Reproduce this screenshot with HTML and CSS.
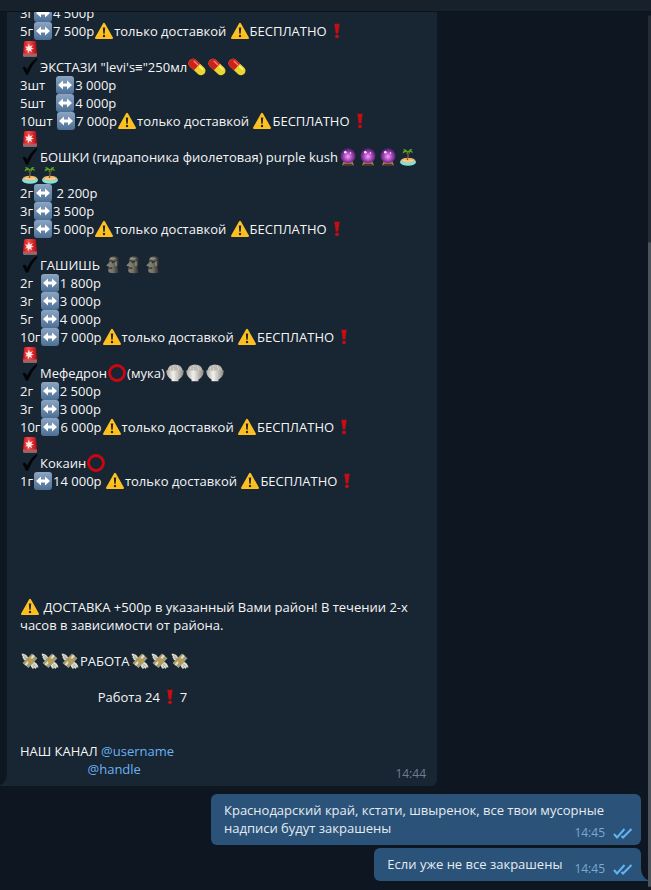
FILE: index.html
```html
<!DOCTYPE html>
<html lang="ru">
<head>
<meta charset="utf-8">
<title>Чат</title>
<link rel="stylesheet" href="styles.css">
</head>
<body>
<svg class="sprite" aria-hidden="true">
  <defs>
    <linearGradient id="g-blue" x2="0" y2="1"><stop stop-color="#8ba5c2"/><stop offset="1" stop-color="#4d6f96"/></linearGradient>
    <linearGradient id="g-warn" x2="0" y2="1"><stop stop-color="#ffd63c"/><stop offset="1" stop-color="#fbb818"/></linearGradient>
    <linearGradient id="g-siren" x2="1" y2="0"><stop stop-color="#c9151b"/><stop offset=".4" stop-color="#fb4a48"/><stop offset="1" stop-color="#a90d13"/></linearGradient>
    <radialGradient id="g-ball" cx=".5" cy=".55" r=".5"><stop stop-color="#f3a6f5"/><stop offset=".55" stop-color="#a945bd"/><stop offset="1" stop-color="#55236f"/></radialGradient>
    <linearGradient id="g-stone" x2="1" y2="0"><stop stop-color="#8b897b"/><stop offset=".5" stop-color="#77756a"/><stop offset="1" stop-color="#2c2e2b"/></linearGradient>
    <linearGradient id="g-bowl" x2="1" y2="0"><stop stop-color="#aaa8a2"/><stop offset=".4" stop-color="#f2f0eb"/><stop offset="1" stop-color="#8c8983"/></linearGradient>
  </defs>
  <symbol id="arrow" viewBox="0 0 18 18"><rect width="18" height="18" rx="3" fill="url(#g-blue)"/><path d="M2 9l5-4.500v3h4v-3L16 9l-5 4.500v-3H7v3z" fill="#fff"/></symbol>
  <symbol id="warn" viewBox="0 0 18 18"><path d="M9 1.800L17 16H1z" fill="url(#g-warn)" stroke="#fdc023" stroke-width="2" stroke-linejoin="round"/><path d="M7.800 5.500h2.400l-.5 6.200H8.300z" fill="#2a2419"/><circle cx="9" cy="14" r="1.200" fill="#2a2419"/></symbol>
  <symbol id="siren" viewBox="0 0 18 18"><path d="M3 2.500Q3 1 4.500 1h9Q15 1 15 2.500L16 14H2z" fill="url(#g-siren)"/><path d="M2 13.500h14v2q0 1-1 1H3q-1 0-1-1z" fill="#b8585b"/><path d="M2.500 15.500h13v1.300h-13z" fill="#7d7478"/><path d="M8 3.500l.8 3 3-1.500-1.500 2.800 2.700 1-3 .8 1.200 2.600-2.600-1.400L7 13.300 6.500 10l-2.500.5 1.800-1.700L4 6.500l2.700.3z" fill="#ffe7e5"/></symbol>
  <symbol id="check" viewBox="0 0 18 18"><path d="M2.300 10.500Q1.700 9 3.300 9q1.700 0 2.700 3.600Q9.500 4.500 15 .8q1.500-.6 1 .6Q10.500 7 7.300 15.500q-.9 2-2.300.5z" fill="#030405" stroke="#030405" stroke-width=".6"/></symbol>
  <symbol id="excl" viewBox="0 0 18 18"><path d="M6.300 1.700h5.400l-1.500 9.800H7.800z" fill="#c50d14"/><circle cx="9" cy="14.300" r="1.900" fill="#c50d14"/></symbol>
  <symbol id="ring" viewBox="0 0 18 18"><circle cx="9" cy="9" r="7.500" fill="none" stroke="#cb0711" stroke-width="2.800"/></symbol>
  <symbol id="pill" viewBox="0 0 18 18"><g transform="rotate(43 9 9)"><rect x="-1" y="4.500" width="20" height="9" rx="4.500" fill="#ead52f"/><path d="M9 4.500H3.500a4.500 4.500 0 000 9H9z" fill="#d0201c"/><path d="M3 6.800h5" stroke="#f4867f" stroke-width="1.300" stroke-linecap="round"/><path d="M10.500 6.800H15" stroke="#fff59a" stroke-width="1.300" stroke-linecap="round"/></g></symbol>
  <symbol id="ball" viewBox="0 0 18 18"><path d="M4.500 13.500h9l1.500 3.700H3z" fill="#b48445"/><path d="M4.500 15.800h9v1.200h-9z" fill="#4c3425"/><circle cx="9" cy="7.800" r="7.500" fill="url(#g-ball)"/><circle cx="6.300" cy="4.200" r="1.300" fill="#fbe3ff"/><circle cx="11.500" cy="5" r=".8" fill="#fbe3ff"/></symbol>
  <symbol id="island" viewBox="0 0 18 18"><ellipse cx="9" cy="14" rx="8" ry="3.800" fill="#7fe3df"/><ellipse cx="9" cy="12.300" rx="6.800" ry="2.500" fill="#efb568"/><path d="M4 12.500q5 1.500 10 0" stroke="#fbe2ae" fill="none"/><path d="M8.300 12Q9.700 8 8.700 3.500" stroke="#8b5a2b" stroke-width="1.300" fill="none"/><path d="M9 3.500Q6 .2 3.500 2q2 0 2 .8Q3.300 3 3.800 5.500 5.500 3.500 8.500 4q-1.500.8-1 2Q9 4.500 9.300 4q1.200.5 1.500 2 .7-1.500-.3-2.300 2-.2 3 1.500Q14 2.700 12 2.400q.8-.7 1.800-.5Q11.500-.3 9 3.500z" fill="#55a51c"/></symbol>
  <symbol id="moai" viewBox="0 0 18 18"><path d="M6 1.500Q10-.3 14.500 1.500L14.800 8l-1.500 3.500 1.700 5q-5 1.500-10 0L4 14.300l.8-1-.6-1 .9-1-.3-.9-2.600-.6L5.600 6l-.8-1z" fill="url(#g-stone)"/><path d="M5.200 4.700l5 .8L8 7M5 12.200h3.300" stroke="#2a2c29" stroke-width="1.200" fill="none"/><path d="M12 5.500v4.500M7 2.800h4.500" stroke="#a29f90" stroke-width="1.100"/></symbol>
  <symbol id="bowl" viewBox="0 0 18 18"><path d="M1.200 7Q2.500.6 9 .6T16.800 7z" fill="#bdb9b2"/><path d="M4 4h1m2-2h1m3 1h1m-5 2h1m4 0h1" stroke="#ece9e3" stroke-width="1.200"/><path d="M.2 6.500h17.600Q17.500 13 12.500 15.500v1.700h-7v-1.700Q.5 13 .2 6.500z" fill="url(#g-bowl)"/></symbol>
  <symbol id="money" viewBox="0 0 18 18"><path d="M8 7.500Q6 1.500.8 1.500q-.5 2 1 2.700-1 1.500.5 2.300 0 2 4.700 3z" fill="#dedccd"/><path d="M10 10.500q-1 4.500 2 6.500l1.300-1.200 1.500 1.200.8-1.700 1.900.2Q17 11 11 8.500z" fill="#dedccd"/><path d="M11 1.500l5.500 4.700L7.500 16 1.500 11z" fill="#a09c79"/><path d="M12.300 2.600l1.500 1.300-8.600 9.800-1.600-1.300z" fill="#e3dfc3"/><circle cx="9" cy="8.500" r="2.500" fill="#c29a42"/><path d="M2.500 3l4 4M3 5.500l3 2.300M12 11.500l3 3M12 13.500l1 2" stroke="#8d8b7b" stroke-width=".7"/></symbol>
  <symbol id="read" viewBox="0 0 20 12"><path d="M1 7l3 3.500L11.500 2M8.500 9l1.500 1.500L18.500 2" fill="none" stroke="#63b4f4" stroke-width="2"/></symbol>
</svg>
<header class="topbar"></header>
<main class="chat">
<article class="bubble incoming">
<div class="text">3г<svg class="e"><use href="#arrow"/></svg>4 500р
5г<svg class="e"><use href="#arrow"/></svg>7 500р<svg class="e"><use href="#warn"/></svg>только доставкой <svg class="e"><use href="#warn"/></svg>БЕСПЛАТНО<svg class="e"><use href="#excl"/></svg>
<svg class="e"><use href="#siren"/></svg>
<svg class="e"><use href="#check"/></svg>ЭКСТАЗИ "levi's≡"250мл<svg class="e"><use href="#pill"/></svg><svg class="e"><use href="#pill"/></svg><svg class="e"><use href="#pill"/></svg>
3шт   <svg class="e"><use href="#arrow"/></svg>3 000р
5шт   <svg class="e"><use href="#arrow"/></svg>4 000р
10шт <svg class="e"><use href="#arrow"/></svg>7 000р<svg class="e"><use href="#warn"/></svg>только доставкой <svg class="e"><use href="#warn"/></svg>БЕСПЛАТНО<svg class="e"><use href="#excl"/></svg>
<svg class="e"><use href="#siren"/></svg>
<svg class="e"><use href="#check"/></svg>БОШКИ (гидрапоника фиолетовая) purple kush<svg class="e"><use href="#ball"/></svg><svg class="e"><use href="#ball"/></svg><svg class="e"><use href="#ball"/></svg><svg class="e"><use href="#island"/></svg>
<svg class="e"><use href="#island"/></svg><svg class="e"><use href="#island"/></svg>
2г<svg class="e"><use href="#arrow"/></svg> 2 200р
3г<svg class="e"><use href="#arrow"/></svg>3 500р
5г<svg class="e"><use href="#arrow"/></svg>5 000р<svg class="e"><use href="#warn"/></svg>только доставкой <svg class="e"><use href="#warn"/></svg>БЕСПЛАТНО<svg class="e"><use href="#excl"/></svg>
<svg class="e"><use href="#siren"/></svg>
<svg class="e"><use href="#check"/></svg>ГАШИШЬ <svg class="e"><use href="#moai"/></svg><svg class="e"><use href="#moai"/></svg><svg class="e"><use href="#moai"/></svg>
2г  <svg class="e"><use href="#arrow"/></svg>1 800р
3г  <svg class="e"><use href="#arrow"/></svg>3 000р
5г  <svg class="e"><use href="#arrow"/></svg>4 000р
10г<svg class="e"><use href="#arrow"/></svg>7 000р<svg class="e"><use href="#warn"/></svg>только доставкой <svg class="e"><use href="#warn"/></svg>БЕСПЛАТНО<svg class="e"><use href="#excl"/></svg>
<svg class="e"><use href="#siren"/></svg>
<svg class="e"><use href="#check"/></svg>Мефедрон<svg class="e"><use href="#ring"/></svg>(мука)<svg class="e"><use href="#bowl"/></svg><svg class="e"><use href="#bowl"/></svg><svg class="e"><use href="#bowl"/></svg>
2г  <svg class="e"><use href="#arrow"/></svg>2 500р
3г  <svg class="e"><use href="#arrow"/></svg>3 000р
10г<svg class="e"><use href="#arrow"/></svg>6 000р<svg class="e"><use href="#warn"/></svg>только доставкой <svg class="e"><use href="#warn"/></svg>БЕСПЛАТНО<svg class="e"><use href="#excl"/></svg>
<svg class="e"><use href="#siren"/></svg>
<svg class="e"><use href="#check"/></svg>Кокаин<svg class="e"><use href="#ring"/></svg>
1г<svg class="e"><use href="#arrow"/></svg>14 000р <svg class="e"><use href="#warn"/></svg>только доставкой <svg class="e"><use href="#warn"/></svg>БЕСПЛАТНО<svg class="e"><use href="#excl"/></svg>






<svg class="e"><use href="#warn"/></svg> ДОСТАВКА +500р в указанный Вами район! В течении 2-х
часов в зависимости от района.

<svg class="e"><use href="#money"/></svg><svg class="e"><use href="#money"/></svg><svg class="e"><use href="#money"/></svg>РАБОТА<svg class="e"><use href="#money"/></svg><svg class="e"><use href="#money"/></svg><svg class="e"><use href="#money"/></svg>

                       Работа 24<svg class="e"><use href="#excl"/></svg>7


НАШ КАНАЛ <a href="#">@username</a>
                    <a href="#">@handle</a></div>
<div class="meta"><time>14:44</time></div>
<svg class="tail tail-left" viewBox="0 0 7 12" aria-hidden="true"><path d="M7 0Q6 9 0 11v1h7z"/></svg>
</article>
<article class="bubble outgoing wide">
<div class="text">Краснодарский край, кстати, швыренок, все твои мусорные
надписи будут закрашены</div>
<div class="meta"><time>14:45</time><svg class="read"><use href="#read"/></svg></div>
</article>
<article class="bubble outgoing short">
<div class="text">Если уже не все закрашены</div>
<div class="meta"><time>14:45</time><svg class="read"><use href="#read"/></svg></div>
<svg class="tail tail-right" viewBox="0 0 7 12" aria-hidden="true"><path d="M0 0Q1 9 7 11v1H0z"/></svg>
</article>
<div class="scrollbar"><div class="thumb"></div></div>
</main>
</body>
</html>
```
FILE: styles.css
```css
* { box-sizing: border-box; }

body {
  margin: 0;
  height: 100vh;
  display: flex;
  flex-direction: column;
  overflow: hidden;
  background: #0e1621;
  color: #f5f5f5;
  font: 13px/18px "Open Sans", "Noto Sans", sans-serif;
}

.sprite { position: absolute; width: 0; height: 0; }

.topbar {
  flex: none;
  height: 12px;
  background: #17212b;
  border-bottom: 1px solid #0b131b;
  z-index: 1;
}

.chat {
  position: relative;
  flex: 1;
  min-height: 0;
  display: flex;
  flex-direction: column;
  justify-content: flex-end;
  padding: 0 10px 9px 7px;
  overflow: hidden;
}

.bubble {
  position: relative;
  flex: none;
  display: grid;
  max-width: 430px;
  padding: 7px 8px 6px 13px;
  border-radius: 6px;
}

.bubble > .text, .bubble > .meta { grid-area: 1 / 1; }

.incoming {
  width: 100%;
  margin-bottom: 8px;
  background: #182533;
  border-bottom-left-radius: 0;
}

.outgoing {
  align-self: flex-end;
  background: #2b5278;
  color: #e4ecf2;
}

.wide { width: 100%; margin-bottom: 3px; }

.short {
  display: flex;
  gap: 12px;
  border-bottom-right-radius: 0;
}

.text { white-space: pre-wrap; padding-bottom: 2px; }

.e {
  width: 18px;
  height: 18px;
  margin: 0 1px;
  vertical-align: top;
}

a { color: #6ab3f3; text-decoration: none; }

.meta {
  place-self: end;
  display: flex;
  align-items: center;
  gap: 8px;
  height: 12px;
  font-size: 12px;
  line-height: 12px;
  color: #7da8d3;
}

.incoming .meta { color: #6d7f8f; padding-right: 3px; }

.read { width: 20px; height: 12px; }

.tail { position: absolute; bottom: 0; width: 7px; height: 12px; }
.tail-left { right: 100%; fill: #182533; }
.tail-right { left: 100%; fill: #2b5278; }

.scrollbar {
  position: absolute;
  top: 3px;
  right: 0;
  bottom: 3px;
  width: 3px;
  display: flex;
  align-items: flex-end;
  border-radius: 2px;
  background: #252c35;
}

.thumb {
  width: 100%;
  height: 74%;
  border-radius: 2px;
  background: #4c535a;
}
```
